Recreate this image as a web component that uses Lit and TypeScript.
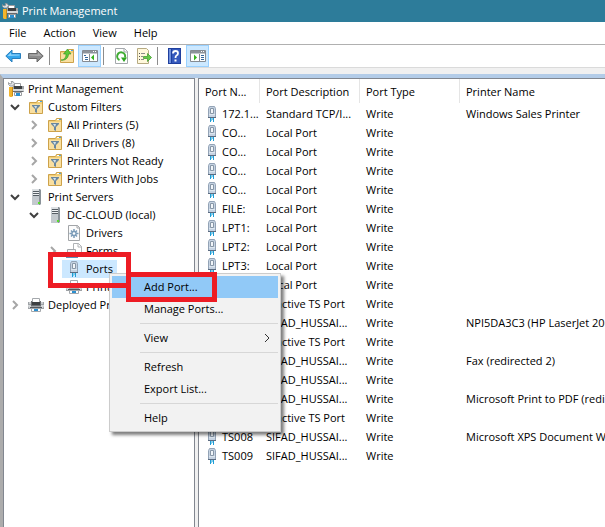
import { LitElement, html, css, svg, nothing } from "lit";
import { customElement, property } from "lit/decorators.js";
import { classMap } from "lit/directives/class-map.js";

const printer = svg`
  <path d="M4.500 1.500h7v4h-7z" fill="#fff" stroke="#a4a8ac"/>
  <path d="M0 5h16v7H0z" fill="#9fa3a7"/>
  <path d="M1 5h2v2H1zM13 5h2v2h-2z" fill="#c9ccce"/>
  <path d="M3 4h1v4h8V4h1v5H3z" fill="#6b6e71"/>
  <path d="M4 5h8v3H4z" fill="#3d4042"/>
  <path d="M0 8h3v2h10V8h3v1l-1 2H1L0 9z" fill="#d5d8da"/>
  <path d="M2 10h12v1H2z" fill="#55585b"/>
  <path d="M3.500 11.500h9v3h-9z" fill="#fff" stroke="#a4a8ac"/>
  <path d="M6 12h4v2H6z" fill="#2b8fd0"/>`;

const folder = svg`
  <path d="M1.500 3.500h7l1-2h5v13h-13z" fill="#f2cf76" stroke="#cda24a"/>
  <path d="M2 5h12v9H2z" fill="#f9dfa0"/>
  <path d="M10 2h4v1h-4z" fill="#fff"/><path d="M12 2h2v1h-2z" fill="#4ba3e0"/>`;

const windowFrame = svg`
  <path d="M.5 2.500h15v11H.5z" fill="#fff" stroke="#858b92"/>
  <path d="M1 3h14v2H1z" fill="#8d939a"/>
  <path d="M11 3h1v1h-1zM13 3h1v1h-1z" fill="#fff"/>
  <path d="M1 5.500h14" stroke="#c4c8cc"/>`;

const icons: Record<string, unknown> = {
  app: svg`
    <path d="M6.500 2.500h6v3h-6z" fill="#fff" stroke="#9a9da0"/>
    <path d="M5 5h11v6H5z" fill="#9fa3a7"/>
    <path d="M6 5h8v3H6z" fill="#3d4042"/>
    <path d="M5 8h11v2H5z" fill="#d5d8da"/>
    <path d="M5 10h10v1H5z" fill="#66696c"/>
    <path d="M6.500 11.500h7v3h-7z" fill="#fff" stroke="#9a9da0"/>
    <path d="M8 12h4v3H8z" fill="#2b8fd0"/>
    <path d="M.5 1.500L2 3l2-1L3 .5h2l1.500 2L5 5H2L.5 3.500z" fill="#dfe1e3" stroke="#8b8e91" stroke-width=".8"/>
    <path d="M1 6h4v9l-1 1H2l-1-1z" fill="#f3b52c"/><path d="M4 6h1v9H4z" fill="#c98a16"/>`,
  printer,
  filter: svg`${folder}
    <path d="M4 6h8v1L9 10v4l-2-1v-3L4 7z" fill="#6a879e"/>
    <path d="M6 7h3l-1 3z" fill="#d3e4ee"/>`,
  server: svg`
    <path d="M4 0h8l1 1v14l-1 1H4z" fill="#8a9299"/>
    <path d="M4 0h7v16H4z" fill="#c3c9ce"/>
    <path d="M4 0h7v2H4z" fill="#dde1e4"/>
    <path d="M5 2h6v1H5zM5 4h6v1H5zM5 6h6v1H5z" fill="#555d64"/>
    <path d="M5 3h6v1H5zM5 5h6v1H5z" fill="#eef1f3"/>
    <path d="M10 13h2v2h-2z" fill="#55dc2c"/>`,
  drivers: svg`
    <path d="M2.500.5h9l2 2v13h-11z" fill="#fcfcfc" stroke="#a2a5a8"/>
    <path d="M11 0v3h3" fill="none" stroke="#a2a5a8"/>
    <path d="M8 4v9M3.500 8.500h9M5 5.500l6 6M11 5.500l-6 6" stroke="#7b9cb8" stroke-width="1.500"/>
    <circle cx="8" cy="8.500" r="2.700" fill="#7b9cb8"/><circle cx="8" cy="8.500" r="1.300" fill="#fff"/>`,
  forms: svg`
    <path d="M7.500.5h5l3 3v9h-8z" fill="#fff" stroke="#b0b3b6"/>
    <path d="M12 0v4h4" fill="none" stroke="#b0b3b6"/>
    <path d="M1.500 6.500h8v6h-8z" fill="#f1f3f4" stroke="#a2a6aa"/>
    <path d="M0 12h12v3H0z" fill="#5f92bb"/>`,
  port: svg`
    <path d="M5.500.5h5l1 2v9h-7v-9z" fill="#c6d3e2" stroke="#93a3b6"/>
    <path d="M6.500 2.500h3v5h-3z" fill="#f1f5f9" stroke="#8796a6"/>
    <path d="M5 8h6v1H5z" fill="#dde6ef"/>
    <path d="M4 11h8v1H4z" fill="#5b6b80"/>
    <path d="M6 12h1v4H6zM9 12h1v4H9z" fill="#1d9dd6"/>
    <path d="M7 12h1v3H7zM8 12h1v2H8z" fill="#87cdea"/>`,
  back: svg`<path d="M.8 8L7 2v3.500h8.500v5H7V14z" fill="#35a6ec" stroke="#2a7fbd"/>
    <path d="M2.500 8L6 4.500v2h8.500v1z" fill="#91d4fb"/>`,
  forward: svg`<path d="M15.200 8L9 2v3.500H.5v5H9V14z" fill="#8c8c8c" stroke="#686868"/>
    <path d="M13.500 8L10 4.500v2H1.500v1z" fill="#b0b0b0"/>`,
  up: svg`${folder}
    <path d="M2 12c3 0 5-2 5-6H4.500L8.500 1 12 6H9.500C9.500 10 6 13 2 12z" fill="#5cc93a" stroke="#2f8f1c" stroke-width=".6"/>`,
  tree: svg`${windowFrame}
    <path d="M7.500 6v8" stroke="#858b92"/>
    <path d="M2 7h2v1H2zM3 9h3v1H3zM3 11h3v1H3z" fill="#36689c"/>
    <path d="M12 6.500v6L9 9.500z" fill="#35b31e"/>`,
  panel: svg`${windowFrame}
    <path d="M9.500 6v8" stroke="#858b92"/>
    <path d="M11 7h3v1h-3zM11 9h3v1h-3zM11 11h3v1h-3z" fill="#36689c"/>
    <path d="M4 6.500v6l3-3z" fill="#35b31e"/>`,
  refresh: svg`
    <path d="M2.500.5h9l3 3v12h-12z" fill="#fff" stroke="#a5a9ad"/>
    <path d="M11 0v4h4" fill="none" stroke="#a5a9ad"/>
    <path d="M6.500 12A4 4 0 1 1 12 9.500" fill="none" stroke="#3fab33" stroke-width="2"/>
    <path d="M8 9.500h6L11 14z" fill="#2fa522"/>`,
  exportList: svg`
    <path d="M1.500.5h9l2 2v13h-11z" fill="#fff8dc" stroke="#b6aa82"/>
    <path d="M3 5h1v1H3zM3 8h1v1H3zM3 11h1v1H3z" fill="#555"/>
    <path d="M5 5.500h4M5 8.500h2M5 11.500h3" stroke="#8b8b8b"/>
    <path d="M7.500 8.500h4V5.500l4 4-4 4v-3h-4z" fill="#63cb49" stroke="#39922a" stroke-width=".7"/>`,
  help: svg`
    <path d="M1 0h13v16H1z" fill="#1f3f9e"/><path d="M2 1h2v14H2z" fill="#6f90dc"/><path d="M5 1h8v14H5z" fill="#3559bd"/>
    <path d="M6 5.500Q6 3 8.500 3T11 5.300Q11 7 9.500 7.500 8.500 8 8.500 10" fill="none" stroke="#fff" stroke-width="1.800"/>
    <path d="M7.500 11.500h2v2h-2z" fill="#fff"/>`,
};

@customElement("mmc-icon")
class MmcIcon extends LitElement {
  @property() name = "";
  static styles = css`
    :host { display: block; flex: none; width: 16px; height: 16px; }
    svg { display: block; }
  `;
  render() {
    return html`<svg width="16" height="16" viewBox="0 0 16 16" aria-hidden="true">${icons[this.name]}</svg>`;
  }
}

interface TreeNode { label: string; icon: string; level: number; state?: "open" | "closed"; selected?: boolean; }

const nodes: TreeNode[] = [
  { label: "Print Management", icon: "app", level: 0 },
  { label: "Custom Filters", icon: "filter", level: 1, state: "open" },
  { label: "All Printers (5)", icon: "filter", level: 2, state: "closed" },
  { label: "All Drivers (8)", icon: "filter", level: 2, state: "closed" },
  { label: "Printers Not Ready", icon: "filter", level: 2, state: "closed" },
  { label: "Printers With Jobs", icon: "filter", level: 2, state: "closed" },
  { label: "Print Servers", icon: "server", level: 1, state: "open" },
  { label: "DC-CLOUD (local)", icon: "server", level: 2, state: "open" },
  { label: "Drivers", icon: "drivers", level: 3 },
  { label: "Forms", icon: "forms", level: 3, state: "closed" },
  { label: "Ports", icon: "port", level: 3, selected: true },
  { label: "Printers", icon: "printer", level: 3 },
  { label: "Deployed Printers", icon: "printer", level: 1, state: "closed" },
];

const ports: string[][] = [
  ["172.1...", "Standard TCP/I...", "Windows Sales Printer"],
  ["CO...", "Local Port", ""],
  ["CO...", "Local Port", ""],
  ["CO...", "Local Port", ""],
  ["CO...", "Local Port", ""],
  ["FILE:", "Local Port", ""],
  ["LPT1:", "Local Port", ""],
  ["LPT2:", "Local Port", ""],
  ["LPT3:", "Local Port", ""],
  ["POR...", "Local Port", ""],
  ["TS001", "Inactive TS Port", ""],
  ["TS002", "SIFAD_HUSSAI...", "NPI5DA3C3 (HP LaserJet 200 color)"],
  ["TS003", "Inactive TS Port", ""],
  ["TS004", "SIFAD_HUSSAI...", "Fax (redirected 2)"],
  ["TS005", "SIFAD_HUSSAI...", ""],
  ["TS006", "SIFAD_HUSSAI...", "Microsoft Print to PDF (redirected 2)"],
  ["TS007", "Inactive TS Port", ""],
  ["TS008", "SIFAD_HUSSAI...", "Microsoft XPS Document Writer"],
  ["TS009", "SIFAD_HUSSAI...", ""],
];

const tools = [
  { icon: "back", label: "Back" },
  { icon: "forward", label: "Forward" },
  null,
  { icon: "up", label: "Up one level" },
  { icon: "tree", label: "Show or hide console tree", on: true },
  null,
  { icon: "refresh", label: "Refresh" },
  { icon: "exportList", label: "Export list" },
  null,
  { icon: "help", label: "Help" },
  { icon: "panel", label: "Show or hide action pane", on: true },
];

const menu = ["Add Port...", "Manage Ports...", null, "View", null, "Refresh", "Export List...", null, "Help"];

@customElement("app-root")
class AppRoot extends LitElement {
  static styles = css`
    :host {
      display: flex; flex-direction: column; position: relative; box-sizing: border-box;
      min-height: 100vh; overflow: hidden; background: #f0f0f0; color: #000;
      font: 11px/18px "Open Sans", "Noto Sans", sans-serif; white-space: nowrap;
    }
    button { font: inherit; color: inherit; border: 0; padding: 0; margin: 0; background: none; }
    ul { list-style: none; margin: 0; padding: 0; }
    .title { display: flex; align-items: center; gap: 4px; height: 22px; padding-left: 2px; background: #2d7c9a; color: #fff; }
    .title h1 { font: inherit; margin: 0; }
    .menubar { display: flex; gap: 17px; height: 22px; padding-left: 9px; background: #fff; border-bottom: 1px solid #b0b0b0; }
    .toolbar { display: flex; align-items: center; height: 22px; padding-left: 1px; background: #fff; border-bottom: 1px solid #dadada; }
    .tool { box-sizing: border-box; width: 23px; height: 22px; display: grid; place-items: center; }
    .tool.on { background: #cce8ff; border: 1px solid #99d1ff; }
    .rule { width: 1px; height: 18px; margin: 0 5px 0 2px; background: #8c8c8c; }
    .body { flex: 1; display: grid; grid-template-columns: 192px minmax(0, 1fr); column-gap: 3px;
      margin-top: 6px; border-top: 4px solid #b3cce8; border-left: 3px solid #acacac; }
    .pane { background: #fff; border: 1px solid #828790; border-bottom: 0; overflow: hidden; }
    .list { border-right: 0; }
    .tree { padding-top: 1px; }
    .node { display: flex; align-items: center; height: 18px; }
    .l2 { padding-left: 19px; }
    .l3 { padding-left: 38px; }
    .chev { box-sizing: border-box; width: 20px; padding-left: 2px; flex: none; display: grid; place-items: center; }
    .open { color: #404040; }
    .closed { color: #a6a6a6; }
    .chev svg { display: block; fill: none; stroke: currentColor; stroke-width: 2; }
    .label { padding: 0 4px; }
    .item { display: flex; align-items: center; padding-left: 4px; }
    .selected { background: #cce8ff; }
    table { width: 100%; table-layout: fixed; border-collapse: collapse; }
    .c1 { width: 61px; }
    .c2 { width: 100px; }
    th { height: 25px; padding: 0 0 0 6px; text-align: left; font-weight: 400; overflow: hidden;
      background: linear-gradient(#e5e5e5, #e5e5e5) right top / 1px 24px no-repeat; }
    th:last-child { background: none; }
    td { height: 19px; padding: 0 0 0 6px; line-height: 19px; overflow: hidden; }
    .name { display: flex; align-items: center; gap: 2px; margin-left: -1px; }
    .menu { position: absolute; left: 109px; top: 273px; width: 172px; box-sizing: border-box;
      padding: 2px; background: #f2f2f2; border: 1px solid #ccc; box-shadow: 3px 3px 3px rgba(0, 0, 0, .5); }
    .entry { display: flex; align-items: center; justify-content: space-between; width: 100%; height: 22px; padding: 0 8px 0 32px; text-align: left; }
    .entry.hot { background: #91c9f7; }
    .divider { height: 1px; margin: 3px 0 3px 28px; background: #d7d7d7; }
    .more { fill: none; stroke: #333; }
    .mark { position: absolute; box-sizing: border-box; border: 5px solid #ed1c24; pointer-events: none; }
    .mark-node { left: 48px; top: 252px; width: 83px; height: 36px; }
    .mark-entry { left: 126px; top: 272px; width: 91px; height: 30px; }
  `;

  private node(n: TreeNode) {
    return html`<li class=${classMap({ node: true, l2: n.level === 2, l3: n.level === 3 })} role="treeitem">
      ${n.level === 0 ? nothing : html`<span class="chev ${n.state ?? ""}">
        ${n.state === "open" ? html`<svg width="10" height="8" viewBox="0 0 10 8"><path d="M1 2l4 4 4-4"/></svg>` : nothing}
        ${n.state === "closed" ? html`<svg width="8" height="10" viewBox="0 0 8 10"><path d="M2 1l4 4-4 4"/></svg>` : nothing}
      </span>`}
      <span class="item ${n.selected ? "selected" : ""}">
        <mmc-icon name=${n.icon}></mmc-icon><span class="label">${n.label}</span>
      </span>
    </li>`;
  }

  render() {
    return html`
      <header class="title"><mmc-icon name="app"></mmc-icon><h1>Print Management</h1></header>
      <nav class="menubar">${["File", "Action", "View", "Help"].map((m) => html`<button>${m}</button>`)}</nav>
      <div class="toolbar">
        ${tools.map((t) => t
          ? html`<button class="tool ${t.on ? "on" : ""}" aria-label=${t.label}><mmc-icon name=${t.icon}></mmc-icon></button>`
          : html`<span class="rule"></span>`)}
      </div>
      <main class="body">
        <section class="pane"><ul class="tree" role="tree">${nodes.map((n) => this.node(n))}</ul></section>
        <section class="pane list">
          <table>
            <colgroup><col class="c1"><col class="c2"><col class="c2"><col></colgroup>
            <thead><tr><th>Port N...</th><th>Port Description</th><th>Port Type</th><th>Printer Name</th></tr></thead>
            <tbody>
              ${ports.map(([name, desc, printerName]) => html`<tr>
                <td><div class="name"><mmc-icon name="port"></mmc-icon>${name}</div></td>
                <td>${desc}</td><td>Write</td><td>${printerName}</td>
              </tr>`)}
            </tbody>
          </table>
        </section>
      </main>
      <div class="menu" role="menu">
        ${menu.map((m, i) => m
          ? html`<button class="entry ${i === 0 ? "hot" : ""}" role="menuitem">${m}
              ${m === "View" ? html`<svg class="more" width="6" height="10" viewBox="0 0 6 10"><path d="M1 1l4 4-4 4"/></svg>` : nothing}
            </button>`
          : html`<div class="divider" role="separator"></div>`)}
      </div>
      <div class="mark mark-node"></div>
      <div class="mark mark-entry"></div>
    `;
  }
}
